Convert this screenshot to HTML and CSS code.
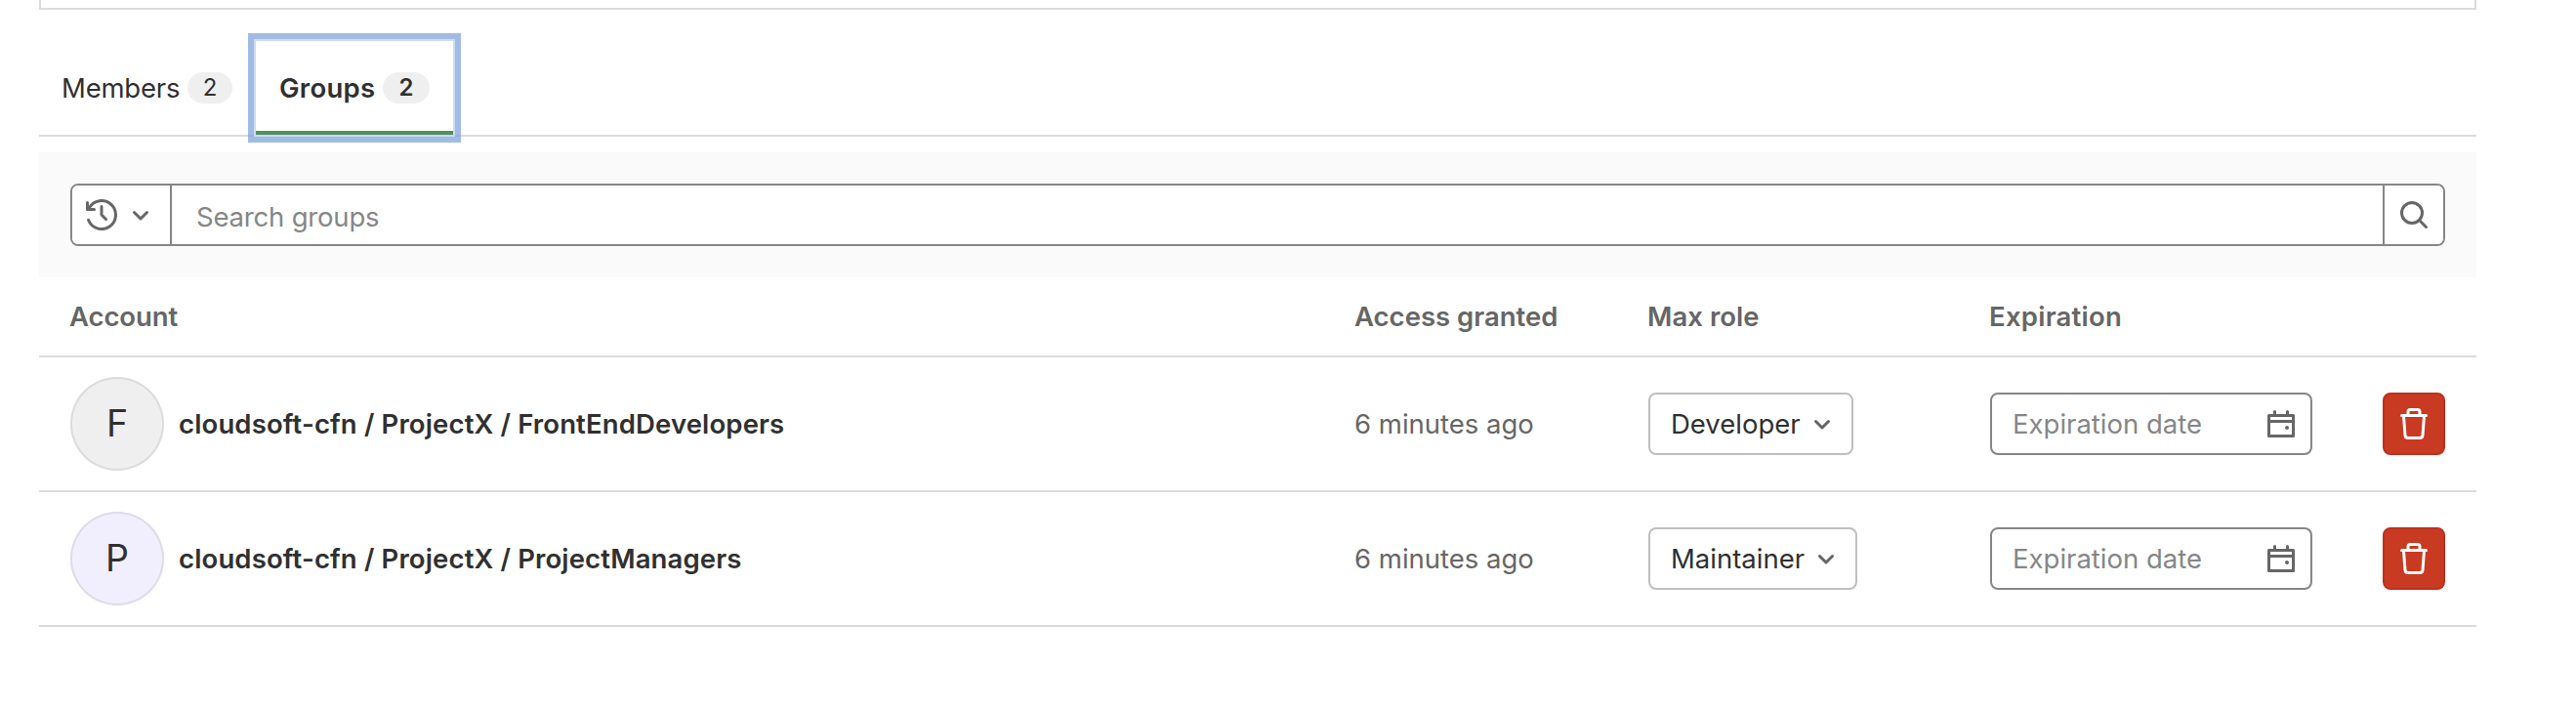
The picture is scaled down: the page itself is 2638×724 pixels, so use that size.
FILE: index.html
```html
<!DOCTYPE html>
<html lang="en">
<head>
<meta charset="utf-8">
<title>Groups</title>
<link rel="stylesheet" href="styles.css">
</head>
<body>
<svg class="sprite" aria-hidden="true">
  <symbol id="chevron" viewBox="0 0 16 16"><path d="M4.75 6.75 8 10l3.250-3.250"/></symbol>
  <symbol id="history" viewBox="0 0 16 16"><path d="M1.250 10.650A7.250 7.250 0 1 0 1.700 4.400M.75 1.750v3.500h3.500M8 3.750V8l2.250 2.250"/></symbol>
  <symbol id="search" viewBox="0 0 16 16"><circle cx="7" cy="7" r="5.250"/><path d="m10.900 10.900 3.350 3.350"/></symbol>
  <symbol id="calendar" viewBox="0 0 16 16"><path d="M1.750 3.750h12.500v10.500H1.750zM1.750 6.750h12.500M4.750 1.750v2M11.250 1.750v2"/><circle class="dot" cx="11" cy="10" r="1"/></symbol>
  <symbol id="trash" viewBox="0 0 16 16"><path d="M1.750 3.750h12.500M5 3.500V1.750a1 1 0 0 1 1-1h4a1 1 0 0 1 1 1V3.500M2.750 4l.74 9.850a1.500 1.500 0 0 0 1.500 1.400h6.020a1.500 1.500 0 0 0 1.500-1.400L13.250 4"/></symbol>
</svg>
<main class="page">
  <section class="panel-end"></section>
  <nav class="tabs">
    <a class="tab"><span class="tab-members">Members</span><span class="badge">2</span></a>
    <a class="tab tab-active"><span class="tab-groups">Groups</span><span class="badge badge-strong">2</span></a>
  </nav>
  <div class="filter">
    <div class="search">
      <button class="search-history"><svg class="icon"><use href="#history"/></svg><svg class="icon"><use href="#chevron"/></svg></button>
      <div class="search-field">Search groups</div>
      <button class="search-submit"><svg class="icon"><use href="#search"/></svg></button>
    </div>
  </div>
  <div class="table">
    <div class="row head">
      <div class="th-account">Account</div><div class="th-granted">Access granted</div><div class="th-role">Max role</div><div class="th-exp">Expiration</div><div></div>
    </div>
    <div class="row">
      <div class="account"><span class="avatar">F</span><span class="name">cloudsoft-cfn / ProjectX / FrontEndDevelopers</span></div>
      <div class="granted">6 minutes ago</div>
      <div><button class="role role-dev">Developer<svg class="icon"><use href="#chevron"/></svg></button></div>
      <div><div class="date"><span>Expiration date</span><svg class="icon"><use href="#calendar"/></svg></div></div>
      <button class="remove"><svg class="icon"><use href="#trash"/></svg></button>
    </div>
    <div class="row">
      <div class="account"><span class="avatar avatar-purple">P</span><span class="name">cloudsoft-cfn / ProjectX / ProjectManagers</span></div>
      <div class="granted">6 minutes ago</div>
      <div><button class="role role-main">Maintainer<svg class="icon"><use href="#chevron"/></svg></button></div>
      <div><div class="date"><span>Expiration date</span><svg class="icon"><use href="#calendar"/></svg></div></div>
      <button class="remove"><svg class="icon"><use href="#trash"/></svg></button>
    </div>
  </div>
</main>
</body>
</html>
```
FILE: styles.css
```css
* { box-sizing: border-box; }
body {
  margin: 0;
  background: #fff;
  color: #303030;
  font: 27.5px/40px Inter, "Liberation Sans", sans-serif;
}
button { margin: 0; padding: 0; border: 0; background: #fff; color: inherit; font: inherit; }
.sprite { display: none; }
.icon {
  width: 32px;
  height: 32px;
  flex: none;
  fill: none;
  stroke: #666;
  stroke-width: 1.5;
  stroke-linecap: round;
  stroke-linejoin: round;
}
.dot { fill: #666; stroke: none; }
.page { width: 2496px; margin-left: 40px; }
.panel-end { height: 10px; border: 2px solid #dbdbdb; border-top: 0; }

/* Tabs */
.tabs { display: flex; height: 130px; padding-top: 30px; border-bottom: 2px solid #dbdbdb; }
.tab { display: flex; align-items: center; height: 100px; padding: 0 22px 0 23px; gap: 9px; }
.tab-active {
  height: 100px;
  margin-bottom: -2px;
  padding: 0 24px 0 24px;
  border: 2px solid rgba(200, 217, 240, .9);
  outline: 6px solid rgba(128, 166, 219, .75);
  box-shadow: inset 0 -4px #50915f;
  font-weight: 600;
}
.tab-members { width: 120px; letter-spacing: -.2px; }
.tab-groups { width: 97px; letter-spacing: .27px; }
.badge {
  width: 46px;
  height: 32px;
  border-radius: 16px;
  background: #efefef;
  font-size: 24px;
  line-height: 32px;
  text-align: center;
}
.badge-strong { width: 48px; }

/* Filter bar */
.filter { height: 128px; margin-top: 16px; padding: 32px; background: #fafafa; }
.search { display: flex; height: 64px; border: 2px solid #868686; border-radius: 8px; overflow: hidden; background: #fff; }
.search-history { display: flex; align-items: center; gap: 8px; width: 102px; padding-left: 14px; border-right: 2px solid #868686; }
.search-field { flex: 1; padding: 12px 0 0 25px; color: #868686; letter-spacing: -.19px; }
.search-submit { display: flex; align-items: center; width: 62px; padding-left: 14px; border-left: 2px solid #868686; }

/* Table */
.row {
  display: grid;
  grid-template-columns: 1316px 300px 350px 402px 64px;
  align-items: center;
  height: 138px;
  padding: 0 32px;
  border-bottom: 2px solid #dbdbdb;
}
.head { height: 82px; color: #666; font-weight: 600; }
.head > div { margin-left: -1px; }
.th-account { letter-spacing: -.1px; }
.th-role { letter-spacing: .05px; }
.th-exp { letter-spacing: .25px; }
.account { display: flex; align-items: center; gap: 15px; }
.avatar {
  width: 96px;
  height: 96px;
  border-radius: 50%;
  background: #efefef;
  box-shadow: inset 0 0 0 2px #dcdcdc;
  font-size: 37.5px;
  line-height: 96px;
  text-align: center;
}
.avatar-purple { background: #f1effd; box-shadow: inset 0 0 0 2px #dedcea; }
.name { font-weight: 600; letter-spacing: .14px; white-space: nowrap; }
.granted { margin-left: -1px; color: #666; }
.role { display: flex; align-items: center; height: 64px; padding-left: 21px; border: 2px solid #bfbfbf; border-radius: 8px; }
.role-dev { width: 210px; gap: 6px; }
.role-main { width: 214px; gap: 6px; }
.date {
  display: flex;
  align-items: center;
  justify-content: space-between;
  width: 330px;
  height: 64px;
  padding: 0 14px 0 21px;
  border: 2px solid #868686;
  border-radius: 8px;
  color: #868686;
}
.remove { display: grid; place-items: center; width: 64px; height: 64px; border: 2px solid #bd301d; border-radius: 8px; background: #c93a23; }
.remove .icon { stroke: #fff; }
```
